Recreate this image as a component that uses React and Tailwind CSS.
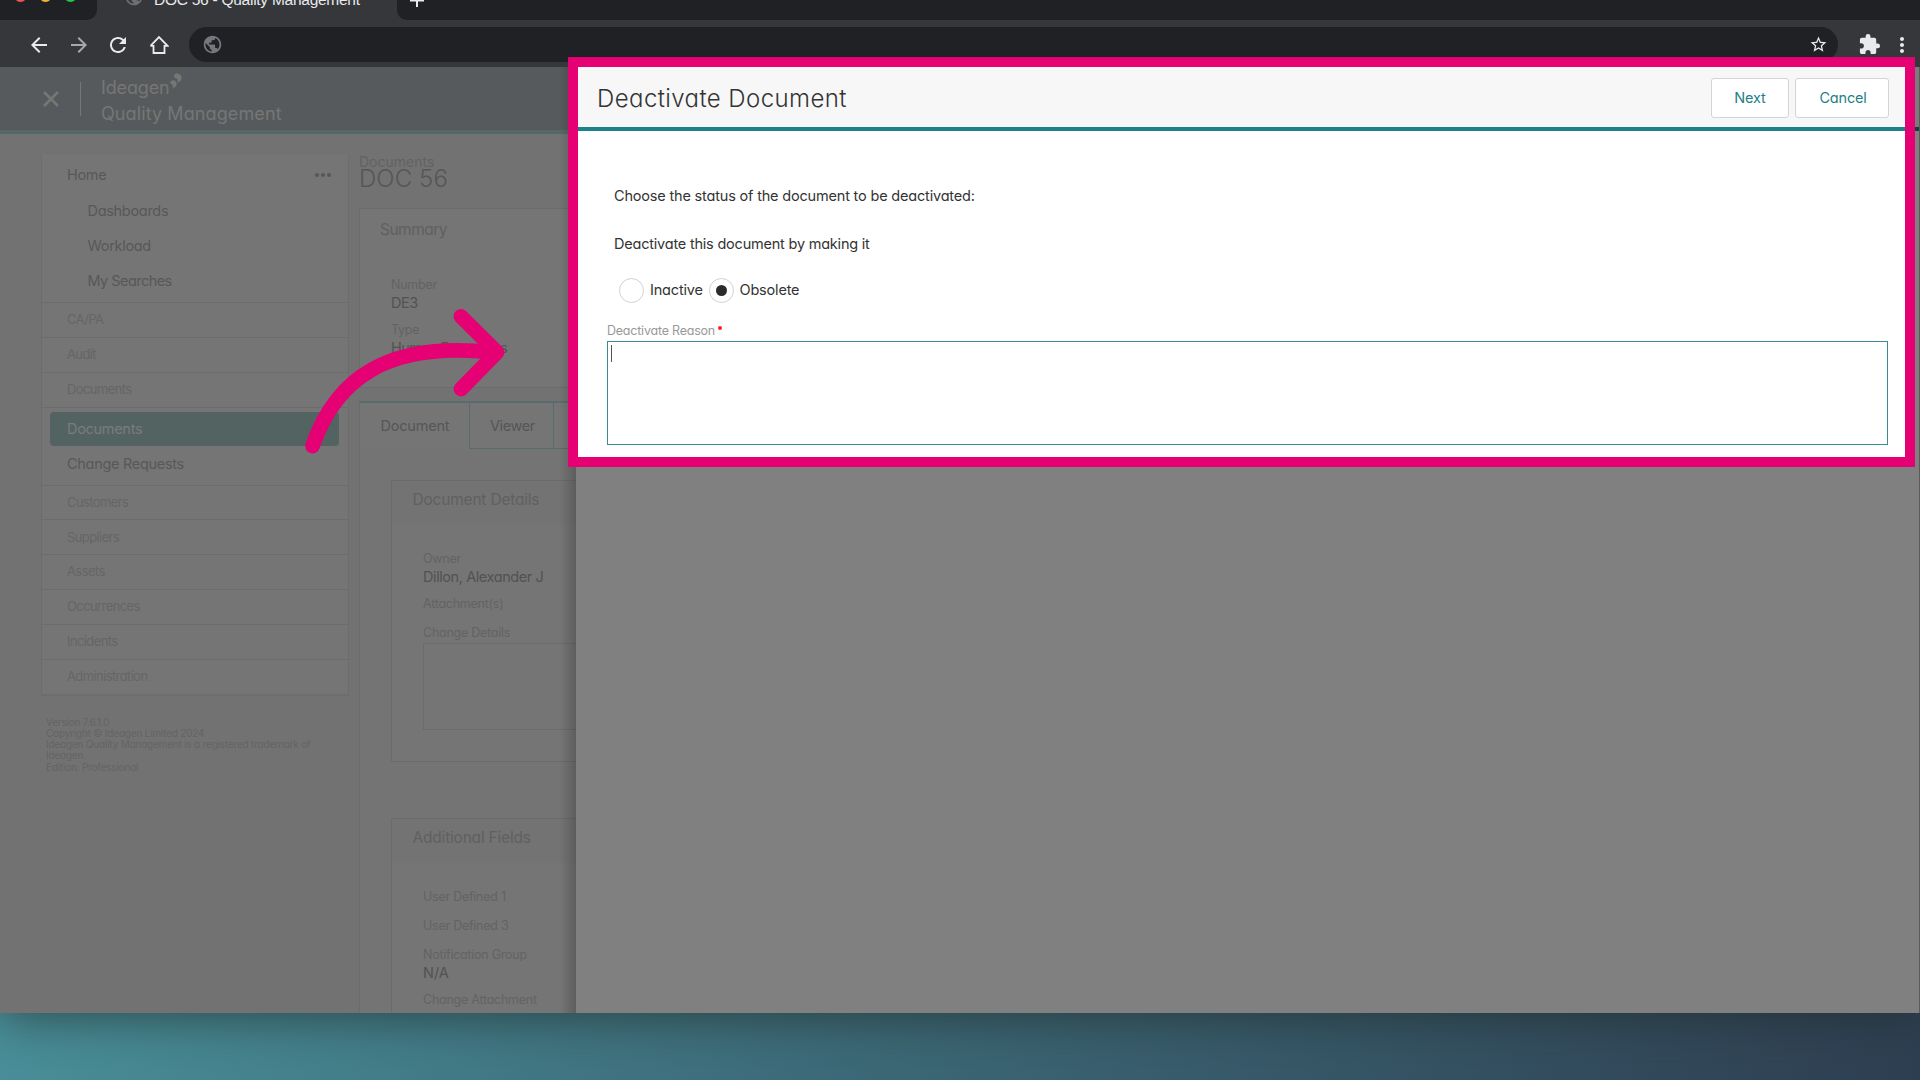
import {
  MdArrowBack,
  MdArrowForward,
  MdExtension,
  MdMoreVert,
  MdPublic,
  MdRefresh,
  MdStarOutline,
} from "react-icons/md";

const categories = ["Customers", "Suppliers", "Assets", "Occurrences", "Incidents", "Administration"];

function TabBar() {
  return (
    <div className="flex h-5 shrink-0 overflow-hidden bg-[#36373b]">
      <div className="flex h-5 w-[97px] items-start gap-3 rounded-br-[10px] bg-[#202124] pl-[14px]">
        <span className="-mt-[11px] h-[13px] w-[13px] rounded-full bg-[#f4544d]" />
        <span className="-mt-[11px] h-[13px] w-[13px] rounded-full bg-[#f5b235]" />
        <span className="-mt-[11px] h-[13px] w-[13px] rounded-full bg-[#23c840]" />
      </div>
      <div className="flex w-[300px] items-start pl-[27px]">
        <MdPublic className="-mt-[13px] text-[#6c6f73]" size={20} />
        <span className="-mt-[12px] ml-[10px] font-['Liberation_Sans',sans-serif] text-[15.5px] leading-6 whitespace-nowrap text-[#e8eaed] tracking-[-0.26px]">
          DOC 56 - Quality Management
        </span>
      </div>
      <div className="flex-1 rounded-bl-[10px] bg-[#202124] pl-[12px]">
        <svg width="16" height="8" viewBox="0 0 16 8" stroke="#e8eaed" strokeWidth="2">
          <path d="M1 0.5H15M8 0V7" />
        </svg>
      </div>
    </div>
  );
}

function Toolbar() {
  return (
    <div className="flex h-[47px] shrink-0 items-center bg-[#36373b] pt-[2px] pl-[27px] text-[#e8eaed]">
      <MdArrowBack size={24} />
      <MdArrowForward size={24} className="ml-[16px] text-[#a6a8ab]" />
      <MdRefresh size={24} className="ml-[15px]" />
      <svg className="ml-[19px]" width="20" height="20" viewBox="0 0 20 20" fill="none" stroke="currentColor" strokeWidth="1.8">
        <path d="M4.500 10V18H15.500V10M1.500 10.800L10 2L18.500 10.800H15M5 10.800H1.500" />
      </svg>
      <div className="ml-[20px] flex h-[35px] w-[1649px] items-center justify-between rounded-full bg-[#202124] pr-[10px] pl-[13px]">
        <MdPublic size={21} className="text-[#74777b]" />
        <MdStarOutline size={19} />
      </div>
      <MdExtension size={23} className="ml-[20px]" />
      <MdMoreVert size={24} className="ml-[9px]" />
    </div>
  );
}

function AppHeader() {
  return (
    <div className="flex h-[67px] shrink-0 items-center border-b-4 border-[#546866] bg-[#575a5c] pl-[43px] text-[#767675]">
      <svg width="16" height="16" viewBox="0 0 16 16" stroke="currentColor" strokeWidth="2.6">
        <path d="M1 1L15 15M15 1L1 15" />
      </svg>
      <span className="ml-[21px] h-[34px] w-px bg-[#767675]" />
      <div className="ml-[20px] pt-[5px] text-[18px] leading-[26px]">
        <div className="flex">
          <span className="tracking-[-0.15px]">Ideagen</span>
          <svg className="-mt-[2px]" width="12" height="16" viewBox="0 0 12 16" fill="currentColor">
            <path d="M6 0.500C9.500 0 12 2.500 11.500 5.500C11.100 8 9.200 9.300 7 9.600C7.600 8.300 7.900 7.300 7.300 6.300C6.600 5 5 5.200 4.300 4.200C3.400 2.800 4.300 0.900 6 0.500Z" />
            <path d="M2 7.500C4.800 6.800 7 8.800 6.700 11.300C6.400 13.500 4.500 14.900 2.300 15.200C3 13.900 3.200 13 2.800 12.300C2.200 11.400 1 11.500 0.500 10.300C0 9 0.700 7.800 2 7.500Z" />
          </svg>
        </div>
        <div className="tracking-[0.1px]">Quality Management</div>
      </div>
    </div>
  );
}

function Category({ name }) {
  return (
    <div className="flex h-[34.85px] items-center border-t border-[#6c6c6c] pl-[25px] text-[13px] tracking-[-0.6px] text-[#656565]">
      {name}
    </div>
  );
}

function Sidebar() {
  return (
    <div className="w-[359px] shrink-0 pt-[20px] pl-[41px]">
      <div className="w-[308px] border border-b-2 border-[#6d6d6d] border-t-transparent bg-[#757575] text-[14.5px] tracking-[-0.3px] text-[#585858]">
        <div className="flex h-[39px] items-center justify-between pr-[16px] pl-[25px]">
          Home
          <svg width="18" height="6" viewBox="0 0 18 6" fill="currentColor">
            <circle cx="3" cy="3" r="2.100" />
            <circle cx="9" cy="3" r="2.100" />
            <circle cx="15" cy="3" r="2.100" />
          </svg>
        </div>
        <div className="-mt-px h-[109px] pl-[45.5px] leading-[35px]">
          <div>Dashboards</div>
          <div>Workload</div>
          <div className="tracking-[-0.55px]">My Searches</div>
        </div>
        <Category name="CA/PA" />
        <Category name="Audit" />
        <Category name="Documents" />
        <div className="h-[78px] border-t border-[#6c6c6c] pt-[4px] pr-[9px] pl-[8px]">
          <div className="flex h-[34px] items-center rounded bg-[#536362] pl-[17px] text-[#7b7b7b]">Documents</div>
          <div className="flex h-[36px] items-center pl-[17px]">Change Requests</div>
        </div>
        {categories.map((name) => (
          <Category key={name} name={name} />
        ))}
      </div>
      <div className="mt-[21px] w-[290px] pl-[5px] text-[10px] leading-[11.3px] tracking-[-0.2px] text-[#646464]">
        Version 7.6.1.0
        <br />
        Copyright © Ideagen Limited 2024
        <br />
        Ideagen Quality Management is a registered trademark of Ideagen
        <br />
        Edition: Professional
      </div>
    </div>
  );
}

function Label({ children, className = "" }) {
  return (
    <div className={`flex h-[18px] items-center text-[12.5px] tracking-[-0.25px] whitespace-nowrap text-[#636363] ${className}`}>
      {children}
    </div>
  );
}

function Value({ children, className = "tracking-[-0.42px]" }) {
  return (
    <div className={`flex h-[18px] items-center text-[14.5px] whitespace-nowrap text-[#525252] ${className}`}>
      {children}
    </div>
  );
}

function CardTitle({ children }) {
  return (
    <div className="flex h-[44px] items-center bg-[#737373] pb-[6px] pl-[20.5px] text-[15.5px] tracking-[-0.2px] text-[#606060]">
      {children}
    </div>
  );
}

function Record() {
  return (
    <div className="flex w-[217px] flex-col overflow-hidden text-[#565656]">
      <div className="h-[74px] shrink-0 pt-[19px]">
        <div className="text-[14px] leading-[17px] text-[#626262]">Documents</div>
        <div className="text-[24px] leading-[18px] font-light tracking-[0.1px]">DOC 56</div>
      </div>
      <div className="h-[180px] w-[240px] shrink-0 border border-[#6b6b6b] bg-[#757575]">
        <div className="flex h-[41px] items-center pl-[20px] text-[15.5px] tracking-[-0.5px] text-[#606060]">Summary</div>
        <div className="pt-[26px] pl-[31px]">
          <Label>Number</Label>
          <Value>DE3</Value>
          <Label className="mt-[9px]">Type</Label>
          <Value className="tracking-[-0.65px]">Human Resources</Value>
        </div>
      </div>
      <div className="mt-[13px] flex h-[48px] w-[240px] shrink-0 border-t-2 border-[#5a6b6b] bg-[#757575] pb-0 text-[14.5px] tracking-[-0.2px]">
        <div className="flex w-[110px] items-center border-l border-l-[#6b6b6b] pl-[20.5px]">Document</div>
        <div className="flex w-[85px] items-center border-r border-b border-l border-[#5a6b6b] pl-[20px] tracking-[-0.4px]">Viewer</div>
        <div className="flex-1 border-b border-[#5a6b6b]" />
      </div>
      <div className="w-[240px] flex-1 border-l border-[#6b6b6b] bg-[#747474] pt-[31px] pl-[31px]">
        <div className="h-[282px] border border-[#6b6b6b] bg-[#757575]">
          <CardTitle>Document Details</CardTitle>
          <div className="pt-[25px] pl-[31px]">
            <Label>Owner</Label>
            <Value>Dillon, Alexander J</Value>
            <Label className="mt-[9px]">Attachment(s)</Label>
            <Label className="mt-[11px]">Change Details</Label>
            <div className="mt-px h-[87px] border border-[#6b6b6b]" />
          </div>
        </div>
        <div className="mt-[56px] h-[240px] border border-[#6b6b6b] bg-[#757575]">
          <CardTitle>Additional Fields</CardTitle>
          <div className="pt-[25px] pl-[31px]">
            <Label>User Defined 1</Label>
            <Label className="mt-[11px]">User Defined 3</Label>
            <Label className="mt-[11px]">Notification Group</Label>
            <Value className="tracking-normal">N/A</Value>
            <Label className="mt-[9px]">Change Attachment</Label>
          </div>
        </div>
      </div>
    </div>
  );
}

function DeactivateDialog() {
  return (
    <div className="absolute top-[57px] left-[568px] h-[410px] w-[1347px] border-10 border-[#e50074] bg-white text-[14.5px] tracking-[-0.18px] text-[#333]">
      <div className="flex h-[64px] items-center gap-[6px] border-b-4 border-[#1c8188] bg-[#f7f7f7] pt-[2px] pr-[16px] pl-[19px]">
        <h1 className="flex-1 pt-px text-[24px] font-light tracking-[0.42px] text-[#333]">Deactivate Document</h1>
        <button className="h-[40px] w-[78px] rounded-[3px] border border-[#d4d4d4] bg-white text-[#1f7f86]">Next</button>
        <button className="h-[40px] w-[94px] rounded-[3px] border border-[#d4d4d4] bg-white pl-[2px] text-[#1f7f86]">Cancel</button>
      </div>
      <div className="pt-[41px] pr-[17px] pl-[29px]">
        <p className="pl-[7px] leading-[48px]">Choose the status of the document to be deactivated:</p>
        <p className="pl-[7px] leading-[48px] tracking-[-0.21px]">Deactivate this document by making it</p>
        <div className="flex h-[44px] items-center pl-[12px]">
          <span className="h-[25px] w-[25px] rounded-full border border-[#d2d2d2]" />
          <span className="w-[64.5px] pl-[6px]">Inactive</span>
          <span className="flex h-[25px] w-[25px] items-center justify-center rounded-full border border-[#d2d2d2]">
            <span className="h-[11px] w-[11px] rounded-full bg-[#2b2b2b]" />
          </span>
          <span className="pl-[6px]">Obsolete</span>
        </div>
        <div className="flex h-[29px] items-center pt-[9px] text-[12.5px] tracking-[-0.22px] text-[#999]">
          Deactivate Reason
          <span className="mb-[6px] ml-[3px] h-[4px] w-[4px] rounded-full bg-[#f22]" />
        </div>
        <div className="h-[104px] border border-[#3b8d93] pt-[3px] pl-[3px]">
          <div className="h-[17px] w-px bg-[#555]" />
        </div>
      </div>
    </div>
  );
}

export default function App() {
  return (
    <div className="relative flex h-[1080px] w-[1920px] flex-col overflow-hidden bg-[linear-gradient(98deg,#4b959e_0%,#3c6876_50%,#2f3f52_100%)] font-[Inter,sans-serif] [font-feature-settings:'cv11']">
      <div className="flex h-[1013px] shrink-0 flex-col shadow-[0_6px_44px_rgba(30,42,40,0.62)]">
        <TabBar />
        <Toolbar />
        <div className="flex min-h-0 flex-1">
          <div className="relative flex w-[576px] flex-col bg-[#727272]">
            <AppHeader />
            <div className="flex min-h-0 flex-1">
              <Sidebar />
              <Record />
            </div>
            <div className="absolute top-0 right-0 h-full w-[16px] bg-gradient-to-r from-transparent to-black/20" />
          </div>
          <div className="flex-1 border-r border-[#5a5a5a] bg-[#808080]">
            <div className="h-[64px] border-b-4 border-[#0e4144] bg-[#7b7b7b]" />
          </div>
        </div>
      </div>
      <svg className="absolute top-[300px] left-[300px]" width="220" height="170" viewBox="300 300 220 170" fill="none" stroke="#e50074" strokeWidth="14.800" strokeLinecap="round" strokeLinejoin="round">
        <path d="M312.500 446C336 378 388 341 493 352.500M461 316.500L497 352.300L461 389" />
      </svg>
      <DeactivateDialog />
    </div>
  );
}
